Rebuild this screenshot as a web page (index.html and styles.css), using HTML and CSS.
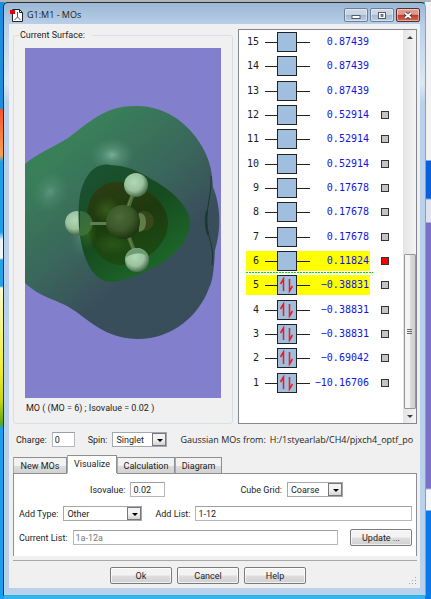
FILE: index.html
```html
<!DOCTYPE html>
<html lang="en">
<head>
    <meta charset="UTF-8">
    <meta name="viewport" content="width=device-width, initial-scale=1.0">
    <title>G1:M1 - MOs</title>
    <link rel="stylesheet" href="styles.css">
</head>
<body>
    <div class="window">
        <div class="titlebar">
            <svg class="app-icon" viewBox="0 0 13 13" width="13" height="13">
                <path d="M2.500 .5h7l3 3v9h-10z" fill="#fff" stroke="#222"/>
                <path d="M9.500 .5v3h3" fill="none" stroke="#222"/>
                <path d="M7.500 3v5M7.500 8l-3 3M7.500 8l3 3" fill="none" stroke="#555"/>
                <rect x="0" y="1" width="5" height="4" fill="#e00000"/>
            </svg>
            <h1 class="title">G1:M1 - MOs</h1>
            <button class="win-btn" aria-label="Minimize">
                <svg viewBox="0 0 10 9" width="10" height="9"><rect x="1" y="4.500" width="8" height="3" fill="#fff" stroke="#555c68"/></svg>
            </button>
            <button class="win-btn" aria-label="Maximize">
                <svg viewBox="0 0 10 9" width="10" height="9"><rect x="1.500" y="1.500" width="7" height="6" fill="#fff" stroke="#555c68"/><rect x="4" y="3.500" width="2" height="2" fill="#8796ac" stroke="#555c68" stroke-width=".8"/></svg>
            </button>
            <button class="win-btn close" aria-label="Close">
                <svg viewBox="0 0 10 9" width="10" height="9"><path d="M2 2l6 5M8 2L2 7" stroke="#553238" stroke-width="3.600"/><path d="M2 2l6 5M8 2L2 7" stroke="#fff" stroke-width="2.100"/></svg>
            </button>
        </div>

        <div class="client">
            <div class="main">
                <fieldset class="surface">
                    <legend>Current Surface:</legend>
                    <svg class="view" viewBox="25 48 196 350" preserveAspectRatio="xMidYMid slice" role="img" aria-label="Molecular orbital surface">
                        <defs>
                            <linearGradient id="outer" gradientUnits="userSpaceOnUse" x1="75" y1="135" x2="185" y2="265">
                                <stop offset="0" stop-color="#398059"/>
                                <stop offset=".5" stop-color="#3a665b"/>
                                <stop offset=".85" stop-color="#394e5b"/>
                            </linearGradient>
                            <linearGradient id="inner" x1="0" y1="0" x2=".7" y2="1">
                                <stop offset="0" stop-color="#1b5335"/>
                                <stop offset=".5" stop-color="#164a1f"/>
                                <stop offset="1" stop-color="#1e6b2b"/>
                            </linearGradient>
                            <linearGradient id="core" x1="0" y1="0" x2=".3" y2="1">
                                <stop offset="0" stop-color="#303d14"/>
                                <stop offset=".5" stop-color="#1d3a0d"/>
                                <stop offset="1" stop-color="#1c4a14"/>
                            </linearGradient>
                            <radialGradient id="shine">
                                <stop offset="0" stop-color="#8fc0ab" stop-opacity=".75"/>
                                <stop offset=".4" stop-color="#74ac94" stop-opacity=".4"/>
                                <stop offset="1" stop-color="#5f9a80" stop-opacity="0"/>
                            </radialGradient>
                            <radialGradient id="glow">
                                <stop offset="0" stop-color="#467a28" stop-opacity=".5"/>
                                <stop offset="1" stop-color="#467a28" stop-opacity="0"/>
                            </radialGradient>
                            <radialGradient id="hydrogen" cx=".42" cy=".38" r=".62">
                                <stop offset="0" stop-color="#b2d9b5"/>
                                <stop offset=".6" stop-color="#9bc19d"/>
                                <stop offset="1" stop-color="#4a6d4d"/>
                            </radialGradient>
                            <radialGradient id="carbon" cx=".4" cy=".35" r=".65">
                                <stop offset="0" stop-color="#4b6b37"/>
                                <stop offset=".6" stop-color="#3c5829"/>
                                <stop offset="1" stop-color="#203511"/>
                            </radialGradient>
                        </defs>
                        <rect x="25" y="48" width="196" height="350" fill="#8280cc"/>
                        <path d="M25 164C38 153 54 147 68 138C88 124 103 106 135 106C168 105 192 127 204 150C211 164 212 173 213 187C220 204 222 227 215 250C214 268 213 281 209 288C199 316 172 339 138 339C110 339 94 325 75 311C58 299 42 299 25 283Z" fill="url(#outer)"/>
                        <path d="M211 176C212 193 206 208 207 222C207 237 215 247 212 265" fill="none" stroke="#172f28" stroke-width="1" stroke-opacity=".8"/>
                        <path d="M207 211Q204 221 208 235" fill="none" stroke="#183b31" stroke-width="2"/>
                        <ellipse cx="112" cy="155" rx="22" ry="17" fill="url(#shine)"/>
                        <ellipse cx="50" cy="192" rx="18" ry="22" transform="rotate(25 50 192)" fill="url(#shine)" opacity=".55"/>
                        <ellipse cx="83" cy="236" rx="13" ry="22" fill="url(#shine)" opacity=".55"/>
                        <circle cx="77" cy="223" r="12" fill="url(#hydrogen)"/>
                        <path d="M80 195C84 177 94 162 110 165C127 166 137 170 151 179C169 188 191 207 190 223C190 238 177 254 160 264C145 273 123 282 109 282C94 280 84 263 80 236C78 222 78 208 80 195Z" fill="url(#inner)"/>
                        <path d="M87 220C86 198 98 182 117 182C143 182 168 202 168 223C168 245 145 265 119 265C98 263 88 242 87 220Z" fill="url(#core)"/>
                        <path d="M80 211A12 12 0 0 1 80 236Z" fill="#356b3d"/>
                        <ellipse cx="87" cy="233" rx="10" ry="17" fill="url(#glow)"/>
                        <ellipse cx="107" cy="210" rx="14" ry="14" fill="url(#glow)"/>
                        <ellipse cx="113" cy="244" rx="20" ry="12" fill="url(#glow)" opacity=".7"/>
                        <circle cx="144" cy="221" r="10" fill="#38471b"/>
                        <path d="M139 213Q146 213 146 222T139 232Z" fill="#5f7d45"/>
                        <path d="M90 223.500h19" stroke="#5c8050" stroke-width="3"/>
                        <path d="M127 210l6-16M128 235l7 18" stroke="#4c6d35" stroke-width="4"/>
                        <path d="M127 208l5-13M128 235l6 17" stroke="#678653" stroke-width="1"/>
                        <circle cx="123" cy="222" r="17" fill="url(#carbon)"/>
                        <circle cx="136" cy="185" r="12" fill="url(#hydrogen)"/>
                        <circle cx="137" cy="260" r="12" fill="url(#hydrogen)"/>
                        <path d="M125 258Q128 248 137 248Q145 248 149 257Q138 249 125 258Z" fill="#6f9b72"/>
                    </svg>
                    <p class="caption">MO ( (MO = 6) ; Isovalue = 0.02 )</p>
                </fieldset>

                <div class="orbitals">
                    <ol class="levels" id="levels"></ol>
                    <div class="scrollbar">
                        <span class="scroll-up"></span>
                        <span class="thumb"><i></i><i></i><i></i></span>
                        <span class="scroll-down"></span>
                    </div>
                </div>
            </div>

            <div class="status">
                <label for="charge">Charge:</label>
                <input type="text" id="charge" class="charge" value="0">
                <label for="spin" class="spin-label">Spin:</label>
                <span class="combo spin"><select id="spin"><option>Singlet</option></select></span>
                <p class="source"><span>Gaussian MOs from:</span><span>H:/1styearlab/CH4/pjxch4_optf_po</span></p>
            </div>

            <div class="tabs" role="tablist">
                <button class="tab" role="tab">New MOs</button>
                <button class="tab active" role="tab" aria-selected="true">Visualize</button>
                <button class="tab calc" role="tab">Calculation</button>
                <button class="tab diagram" role="tab">Diagram</button>
            </div>
            <div class="panel">
                <div class="row first">
                    <label for="iso">Isovalue:</label>
                    <input type="text" id="iso" class="iso" value="0.02">
                    <label for="grid" class="grid-label">Cube Grid:</label>
                    <span class="combo cube"><select id="grid"><option>Coarse</option></select></span>
                </div>
                <div class="row">
                    <label for="type">Add Type:</label>
                    <span class="combo type"><select id="type"><option>Other</option></select></span>
                    <label for="add" class="add-label">Add List:</label>
                    <input type="text" id="add" class="grow" value="1-12">
                </div>
                <div class="row">
                    <label for="current">Current List:</label>
                    <input type="text" id="current" class="grow readonly" value="1a-12a" readonly>
                    <button class="btn update">Update ...</button>
                </div>
            </div>

            <div class="footer">
                <button class="btn">Ok</button>
                <button class="btn">Cancel</button>
                <button class="btn">Help</button>
                <svg class="grip" viewBox="0 0 8 8" width="8" height="8"><path d="M6 0h1v1h-1zM3 3h1v1h-1zM6 3h1v1h-1zM0 6h1v1h-1zM3 6h1v1h-1zM6 6h1v1h-1z" fill="#a5a5a5"/></svg>
            </div>
        </div>
    </div>

    <script src="script.js"></script>
</body>
</html>
```

FILE: styles.css
```css
* {
    box-sizing: border-box;
}
body {
    margin: 0;
    min-height: 100vh;
    padding: 2px 5px 3px 3px;
    font-family: Roboto, "Liberation Sans", Arial, sans-serif;
    font-size: 9px;
    line-height: 12px;
    color: #1c1c1c;
    background:
        linear-gradient(#b4b4b4, #b4b4b4) 0 0 / 100% 2px no-repeat,
        linear-gradient(#1a8fe0 108px, #f4562c 110px, #f8a050 155px, #1aa0e8 162px, #1aa0e8 232px, #e8f4fa 240px, #f4f4f4 258px, #22a4ec 260px, #22a4ec 286px, #fafad0 288px, #f0ec30 370px, #c8d810 400px, #58a818 424px, #18a0f0 428px) 0 0 / 4px 100% no-repeat,
        linear-gradient(#f2f2f2 160px, #0a60d8 161px, #0a60d8 198px, #e0e0f0 200px, #e0e0f0 222px, #7c70c8 223px, #7c70c8 488px, #f4f8fc 490px, #f4f8fc 510px, #0a78e8 511px) 100% 0 / 6px 100% no-repeat,
        #35b4f4;
}
h1, p, ol {
    margin: 0;
    padding: 0;
}
button, input, select {
    font: inherit;
    color: inherit;
    margin: 0;
    border-radius: 0;
}
.window {
    min-height: calc(100vh - 5px);
    padding: 0 5px 7px;
    border: 1px solid #22303c;
    border-right-color: #2cc4e8;
    border-bottom-color: #2cb4d8;
    border-radius: 5px 5px 0 0;
    background: linear-gradient(#9bb7d3, #b9d0e9 22px, #dbe8f6 80px, #b9d1ea 100px);
}
.titlebar {
    display: flex;
    align-items: center;
    gap: 2px;
    height: 21px;
    padding-top: 3px;
}
.app-icon {
    margin: 0 2px 0 1px;
}
.title {
    flex: 1;
    font-family: "Open Sans", "Noto Sans", sans-serif;
    font-size: 9px;
    font-weight: normal;
}
.win-btn {
    display: flex;
    align-items: center;
    justify-content: center;
    width: 24px;
    height: 14px;
    padding: 0;
    border: 1px solid #6d7f96;
    border-radius: 2px;
    background: linear-gradient(#c9d7e7 45%, #a3b9d2 50%, #b9cee4);
    box-shadow: inset 0 0 0 1px rgba(255, 255, 255, 0.45);
}
.win-btn.close {
    border-color: #5e2a2c;
    background: linear-gradient(#dd9b8d 45%, #bd3c26 50%, #d06a50);
}
.client {
    padding: 5px 3px 4px 4px;
    background: #f0f0f0;
}
.main {
    display: flex;
    gap: 5px;
}
.surface {
    flex: 1;
    min-width: 0;
    margin: 0;
    padding: 7px 11px 5px;
    border: 1px solid #d5dfe5;
    border-radius: 3px;
}
.surface legend {
    margin-left: -6px;
    padding: 0 7px 0 1px;
}
.view {
    display: block;
    width: 100%;
    height: 350px;
}
.caption {
    line-height: 20px;
    padding-left: 1px;
}
.orbitals {
    display: flex;
    width: 179px;
    border: 1px solid #828790;
    background: #fff;
}
.levels {
    flex: 1;
    display: grid;
    grid-auto-rows: 1fr;
    padding: 0 0 28px 7px;
    list-style: none;
    font-family: "DejaVu Sans Mono", "Liberation Mono", monospace;
    font-size: 10px;
}
.level {
    position: relative;
    display: flex;
    align-items: center;
    gap: 11px;
}
.bar {
    display: flex;
    align-items: center;
    width: 124px;
    height: 20px;
}
.level.picked .bar {
    background: #ffff00;
}
/* boundary between empty and occupied orbitals */
.level.lumo::after {
    content: "";
    position: absolute;
    left: 0;
    bottom: 0;
    width: 127px;
    height: 1px;
    background: repeating-linear-gradient(90deg, #00e000 0 2px, transparent 2px 3px);
}
.num {
    width: 13px;
    margin-right: 6px;
    text-align: right;
}
.bar svg {
    flex: none;
}
.energy {
    flex: 1;
    display: flex;
    justify-content: flex-end;
    min-width: 0;
    margin-right: 1px;
    color: #1414e0;
}
.level input {
    appearance: none;
    width: 8px;
    height: 8px;
    border: 1px solid #333;
    background: #c4c4c4;
}
.level input:checked {
    background: #ff0000;
}
.scrollbar {
    display: flex;
    flex-direction: column;
    align-items: center;
    width: 13px;
    background: linear-gradient(90deg, #e4e4e4, #f4f4f4);
}
.scroll-up {
    margin: 6px 0 auto;
    border: 3px solid transparent;
    border-top: 0;
    border-bottom: 3px solid #404040;
}
.scroll-down {
    margin: 6px 0 5px;
    border: 3px solid transparent;
    border-bottom: 0;
    border-top: 3px solid #404040;
}
.thumb {
    display: flex;
    flex-direction: column;
    justify-content: center;
    align-items: center;
    gap: 1px;
    width: 12px;
    height: 155px;
    border: 1px solid #979797;
    border-radius: 1px;
    background: linear-gradient(90deg, #f4f4f4 45%, #dcdcdc 50%, #cfcfcf);
}
.thumb i {
    width: 5px;
    height: 1px;
    background: #666;
}
.status {
    display: flex;
    align-items: center;
    gap: 5px;
    height: 31px;
    padding-left: 3px;
}
input[type="text"] {
    height: 15px;
    min-width: 0;
    padding: 0 2px;
    border: 1px solid #b4b8be;
    border-top-color: #9a9fa8;
    background: #fff;
}
.charge {
    width: 23px;
}
.spin-label {
    margin-left: 8px;
}
.source {
    flex: 1;
    display: flex;
    gap: 4px;
    min-width: 0;
    margin-left: 8px;
    white-space: nowrap;
    font-family: "Open Sans", "Noto Sans", sans-serif;
    font-size: 9px;
}
.combo {
    position: relative;
    display: block;
}
.combo select {
    appearance: none;
    display: block;
    width: 100%;
    height: 15px;
    padding: 0 14px 0 3px;
    border: 1px solid #a4a8ae;
    background: #fff;
}
.combo::before {
    content: "";
    position: absolute;
    top: 1px;
    right: 1px;
    bottom: 1px;
    width: 12px;
    border: 1px solid #777;
    background: linear-gradient(#f2f2f2 50%, #d4d4d4);
    pointer-events: none;
}
.combo::after {
    content: "";
    position: absolute;
    top: 7px;
    right: 4px;
    border: 3px solid transparent;
    border-bottom: 0;
    border-top: 3px solid #000;
    pointer-events: none;
}
.spin {
    width: 55px;
}
.cube {
    width: 56px;
}
.type {
    width: 79px;
}
.tabs {
    display: flex;
    align-items: flex-end;
    height: 18px;
}
.tab {
    width: 54px;
    height: 16px;
    padding: 0;
    border: 1px solid #8c8f94;
    border-bottom: 0;
    border-left-color: #a6a9ae;
    background: linear-gradient(#f2f2f2 50%, #dcdcdc 55%, #d2d2d2);
}
.tab.active {
    width: 50px;
    height: 18px;
    padding-bottom: 2px;
    background: #fff;
}
.tab.calc {
    width: 58px;
}
.tab.diagram {
    width: 47px;
}
.panel {
    display: flex;
    flex-direction: column;
    gap: 7px;
    padding: 8px 4px 10px 5px;
    border-left: 1px solid #8c8f94;
    border-right: 1px solid #8c8f94;
    background: linear-gradient(90deg, #8c8f94 53px, #fff 53px, #fff 103px, #8c8f94 103px) 0 0 / 100% 1px no-repeat, #fff;
}
.row {
    display: flex;
    align-items: center;
    gap: 5px;
    height: 17px;
}
.row.first {
    padding-left: 71px;
}
.iso {
    width: 35px;
}
.grid-label {
    margin-left: 70px;
}
.add-label {
    margin-left: 8px;
}
.grow {
    flex: 1;
}
.readonly {
    color: #787878;
}
.btn {
    width: 62px;
    height: 17px;
    padding: 0;
    border: 1px solid #7a7a7a;
    border-radius: 2px;
    background: linear-gradient(#f3f3f3 48%, #dedede 52%, #d0d0d0);
    box-shadow: inset 0 0 0 1px rgba(255, 255, 255, 0.7);
}
.update {
    margin-left: 7px;
}
.footer {
    position: relative;
    display: flex;
    justify-content: center;
    gap: 5px;
    margin-top: 4px;
    padding: 6px 14px 0 0;
    border-top: 1px solid #a8a8a8;
}
.grip {
    position: absolute;
    right: 0;
    bottom: -1px;
}
```

FILE: script.js
```js
const levels = [
    [15, "0.87439"],
    [14, "0.87439"],
    [13, "0.87439"],
    [12, "0.52914"],
    [11, "0.52914"],
    [10, "0.52914"],
    [9, "0.17678"],
    [8, "0.17678"],
    [7, "0.17678"],
    [6, "0.11824"],
    [5, "-0.38831"],
    [4, "-0.38831"],
    [3, "-0.38831"],
    [2, "-0.69042"],
    [1, "-10.16706"]
];

const arrows = `<path d="M18.500 16V4l-3 5" fill="none" stroke="#f01818" stroke-width="1.500"/>
    <path d="M24.500 4v12l3-5" fill="none" stroke="#f01818" stroke-width="1.500"/>`;

const list = document.getElementById("levels");
levels.forEach(([num, energy]) => {
    const li = document.createElement("li");
    li.classList.add("level");
    if (num === 5 || num === 6) li.classList.add("picked");
    if (num === 6) li.classList.add("lumo");
    li.innerHTML = `
        <label class="bar" for="mo${num}">
            <span class="num">${num}</span>
            <svg width="45" height="20" viewBox="0 0 45 20">
                <path d="M0 10.500h45" stroke="#222"/>
                <rect x="12.500" y=".5" width="19" height="19" fill="#a0bede" stroke="#222"/>
                ${num <= 5 ? arrows : ""}
            </svg>
            <span class="energy">${energy.replace("-", "\u2212")}</span>
        </label>
        ${num <= 12 ? `<input type="checkbox" id="mo${num}" ${num === 6 ? "checked" : ""}>` : ""}
    `;
    list.appendChild(li);
});
```
